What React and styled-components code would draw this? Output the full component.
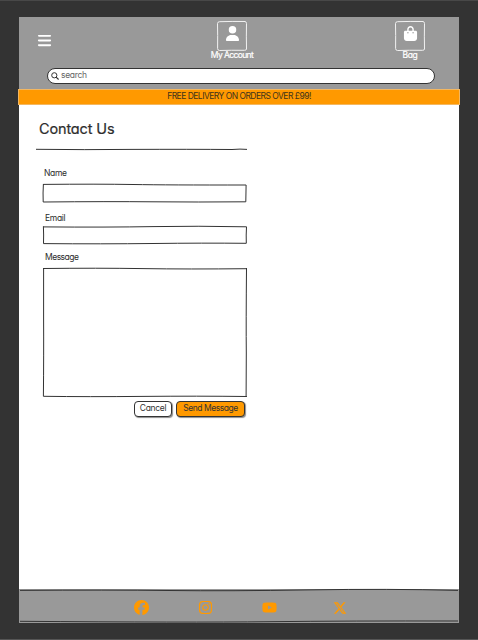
import React from "react";
import styled, { createGlobalStyle } from "styled-components";
import {
  FaBars,
  FaUser,
  FaBagShopping,
  FaFacebook,
  FaInstagram,
  FaYoutube,
  FaXTwitter,
} from "react-icons/fa6";

const GlobalStyle = createGlobalStyle`
  * { box-sizing: border-box; }
  body {
    margin: 0;
    background: #333;
    font-family: Inter, "Liberation Sans", sans-serif;
    font-feature-settings: "cv11";
    color: #2d2d2d;
  }
`;

const Frame = styled.div`
  width: 478px;
  height: 640px;
  padding: 16px 18px 0;
  background: #333;
  border-top: 1px solid #484848;
  border-bottom: 1px solid #555;
`;

const Screen = styled.div`
  display: flex;
  flex-direction: column;
  width: 442px;
  height: 606px;
`;

const Header = styled.header`
  display: flex;
  flex-direction: column;
  height: 72px;
  margin: 0 1px;
  background: #999;
  color: #fff;
  flex-shrink: 0;
`;

const HeaderRow = styled.div`
  display: grid;
  grid-template-columns: 176px 1fr 86px;
  height: 51px;
`;

const MenuButton = styled.button`
  display: flex;
  align-items: flex-start;
  padding: 16px 0 0 18px;
  border: 0;
  background: none;
  color: #fff;
`;

const HeaderLink = styled.div`
  display: flex;
  flex-direction: column;
  align-items: center;
  width: 74px;
  padding-top: 4px;
`;

const IconTile = styled.div`
  position: relative;
  display: flex;
  justify-content: center;
  width: 30px;
  height: 30px;
  padding-top: 5px;
  flex-shrink: 0;
`;

const LinkLabel = styled.span`
  margin-top: -1px;
  font-size: 8.5px;
  line-height: 10px;
  letter-spacing: ${(p) => p.$spacing}px;
  white-space: nowrap;
  -webkit-text-stroke: 0.2px #fff;
`;

const SearchBox = styled.div`
  display: flex;
  align-items: center;
  gap: 2px;
  width: 388px;
  height: 16px;
  margin-left: 28px;
  padding: 0 0 1px 3px;
  border: 1px solid #333;
  border-radius: 8px;
  background: #fff;
  color: #666;
  font-size: 8.5px;
  line-height: 12px;
  letter-spacing: -0.3px;
`;

const SearchText = styled.span`
  margin-top: -1px;
`;

const Banner = styled.div`
  height: 16px;
  border: 1px solid #f3b761;
  background: #ff9900;
  color: #40331c;
  font-size: 8.5px;
  line-height: 12px;
  letter-spacing: -0.52px;
  text-align: center;
  flex-shrink: 0;
`;

const Content = styled.main`
  flex: 1;
  margin: 0 1px;
  padding: 15px 0 0 17px;
  background: #fff;
`;

const Title = styled.h1`
  margin: 0 0 0 3px;
  font-size: 14.5px;
  font-weight: 400;
  line-height: 18px;
  letter-spacing: -0.15px;
  -webkit-text-stroke: 0.2px #2d2d2d;
`;

const Rule = styled.div`
  position: relative;
  width: 211px;
  height: 3px;
  margin-top: 10px;
`;

const Form = styled.div`
  display: flex;
  flex-direction: column;
  width: 204px;
  margin-left: 7px;
`;

const Label = styled.label`
  height: 12px;
  margin: ${(p) => p.$margin};
  font-size: 8.5px;
  line-height: 12px;
  letter-spacing: ${(p) => p.$spacing}px;
`;

const Field = styled.div`
  position: relative;
  width: 204px;
  height: ${(p) => p.$height}px;
  margin-left: ${(p) => p.$left || 0}px;
`;

const Actions = styled.div`
  display: flex;
  gap: 4px;
  margin: 3px 0 0 91px;
`;

const Button = styled.button`
  width: ${(p) => p.$width}px;
  height: 16px;
  padding: 0 0 2px;
  border: 1px solid #333;
  border-radius: 4px;
  background: ${(p) => p.$fill};
  box-shadow: 1px 1px 1px rgba(0, 0, 0, 0.45);
  color: #333;
  font-family: inherit;
  font-feature-settings: inherit;
  font-size: 8.5px;
  line-height: 12px;
  letter-spacing: ${(p) => p.$spacing}px;
  white-space: nowrap;
  flex-shrink: 0;
`;

const Footer = styled.footer`
  position: relative;
  display: flex;
  align-items: center;
  gap: 48px;
  height: 34px;
  margin: 0 1px;
  padding: 3px 0 0 114px;
  background: #999;
  color: #ff9900;
  flex-shrink: 0;
`;

const Social = styled.a`
  display: flex;
  justify-content: center;
  width: ${(p) => p.$width}px;
`;

const Sketch = styled.svg`
  position: absolute;
  inset: 0;
  width: 100%;
  height: 100%;
  overflow: visible;
  fill: none;
  stroke: ${(p) => p.$color || "#333"};
  stroke-width: 1;
`;

function SearchIcon() {
  return (
    <svg width="8" height="8" viewBox="0 0 8 8" fill="none" stroke="#333">
      <circle cx="3.3" cy="3.3" r="2.6" />
      <path d="M5.1 5.1 7.6 7.5" strokeWidth="1.2" />
    </svg>
  );
}

function TileOutline() {
  return (
    <Sketch $color="#f2f2f2" viewBox="0 0 30 30">
      <path d="M2.5 .7 Q15 .3 28 .5 Q29.5 .8 29.5 2.5 Q29.2 15 29.5 28 Q29.2 29.5 27.5 29.3 Q14 29.1 2.5 29.5 Q.7 29.5 .6 27.5 Q.8 14 .5 2.5 Q.6 .8 2.5 .7Z" />
    </Sketch>
  );
}

export default function App() {
  return (
    <>
      <GlobalStyle />
      <Frame>
        <Screen>
          <Header>
            <HeaderRow>
              <MenuButton aria-label="Menu"><FaBars size={15} /></MenuButton>
              <HeaderLink>
                <IconTile><TileOutline /><FaUser size={15} /></IconTile>
                <LinkLabel $spacing={-0.6}>My Account</LinkLabel>
              </HeaderLink>
              <HeaderLink>
                <IconTile><TileOutline /><FaBagShopping size={15} /></IconTile>
                <LinkLabel $spacing={-0.4}>Bag</LinkLabel>
              </HeaderLink>
            </HeaderRow>
            <SearchBox><SearchIcon /><SearchText>search</SearchText></SearchBox>
          </Header>
          <Banner>FREE DELIVERY ON ORDERS OVER £99!</Banner>
          <Content>
            <Title>Contact Us</Title>
            <Rule>
              <Sketch viewBox="0 0 211 3">
                <path d="M0 1.3 Q50 1.9 95 1.4 Q155 1.2 196 1.5 L204 1.1 L211 1.4" />
              </Sketch>
            </Rule>
            <Form>
              <Label $margin="16px 0 0 1px" $spacing={-0.35}>Name</Label>
              <Field $height={23} $left={-0.5}>
                <Sketch viewBox="0 0 204 23">
                  <path d="M.2 5.4 Q55 4.9 90 5.5 T203.1 6 L202.8 22.8 Q155 23.2 110 22.8 T.2 23 Q-.2 14 .4 5" />
                </Sketch>
              </Field>
              <Label $margin="10px 0 0 2px" $spacing={-0.3}>Email</Label>
              <Field $height={20}>
                <Sketch viewBox="0 0 204 20">
                  <path d="M0 2.9 Q65 3.4 110 2.6 T203.5 2.8 Q203 11 203.3 19.3 Q160 18.9 110 19.5 T.5 19.6 Q.8 11 .4 2.4" />
                </Sketch>
              </Field>
              <Label $margin="7px 0 0 2px" $spacing={-0.5}>Message</Label>
              <Field $height={135}>
                <Sketch viewBox="0 0 204 135">
                  <path d="M0 5.5 Q55 4.9 100 5.6 T204 5.7 M203.5 5 Q203 60 203.3 90 L203.1 134 M203.9 133.5 Q155 132.9 100 133.4 T.4 133.3 Q.8 90 .6 55 L.6 5" />
                </Sketch>
              </Field>
              <Actions>
                <Button $width={38} $fill="#fff" $spacing={-0.3}>Cancel</Button>
                <Button $width={69} $fill="#ff9900" $spacing={-0.45}>Send Message</Button>
              </Actions>
            </Form>
          </Content>
          <Footer>
            <Sketch viewBox="0 0 440 34">
              <path d="M1 1.4 Q90 .8 150 1.5 T290 .9 T439 1.4 M439 32 Q330 31.8 250 32.7 T1 32.3" />
            </Sketch>
            <Social $width={16}><FaFacebook size={15} /></Social>
            <Social $width={16}><FaInstagram size={15} /></Social>
            <Social $width={16}><FaYoutube size={15} /></Social>
            <Social $width={30}><FaXTwitter size={14} /></Social>
          </Footer>
        </Screen>
      </Frame>
    </>
  );
}
